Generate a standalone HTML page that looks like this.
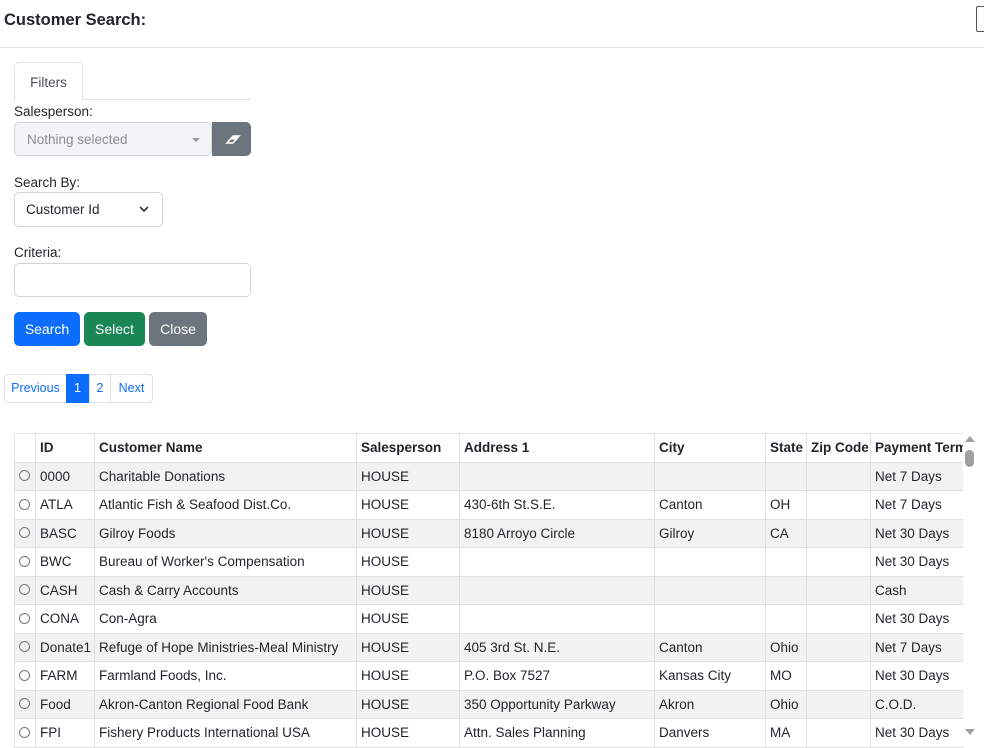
<!DOCTYPE html>
<html><head><style>
*{box-sizing:border-box}
body{margin:0;width:984px;height:746px;overflow:hidden;font-family:"Liberation Sans",sans-serif;font-size:13.5px;color:#212529;background:#fff;position:relative}
.abs{position:absolute}
.hdr{left:0;top:0;width:984px;height:48px;border-bottom:1px solid #dee2e6}
.title{left:4px;top:11px;font-size:16.5px;font-weight:bold;color:#212529}
.tab{left:14px;top:62px;width:69px;height:38px;border:1px solid #dee2e6;border-bottom:none;border-radius:5px 5px 0 0;background:#fff;text-align:center;line-height:40px;color:#495057}
.tabline{left:83px;top:99px;width:168px;border-top:1px solid #dee2e6}
.lbl{left:14px}
.inp{border:1px solid #ced4da;border-radius:5px;background:#fff}
.btn{color:#fff;border-radius:5px;text-align:center;line-height:34px;font-size:14px}
table{border-collapse:collapse;position:absolute;left:14px;top:433px;table-layout:fixed;width:949px}
td,th{border:1px solid #dee2e6;height:28.5px;padding:0 4px;white-space:nowrap;overflow:hidden;text-align:left}
th{font-weight:bold}
tr:nth-child(even) td{background:#f2f2f2}
.r{display:inline-block;width:11px;height:11px;border:1px solid #777;border-radius:50%;margin-top:2px}
.pg{top:374px;height:29px;border:1px solid #dee2e6;line-height:27px;color:#0d6efd;text-align:center;font-size:12.5px}
</style></head><body>
<div class="abs hdr"></div>
<div class="abs title">Customer Search:</div>
<div class="abs" style="left:976px;top:6px;width:10px;height:26px;border:1px solid #555;border-right:none;border-radius:2px"></div>
<div class="abs tab">Filters</div>
<div class="abs tabline"></div>
<div class="abs lbl" style="top:104px">Salesperson:</div>
<div class="abs inp" style="left:14px;top:122px;width:198px;height:34px;background:#f2f4f6;color:#8a8f94;line-height:33px;padding-left:12px">Nothing selected<span class="abs" style="right:11px;top:15px;border:4px solid transparent;border-top:4px solid #999;border-bottom:none"></span></div>
<div class="abs" style="left:212px;top:122px;width:39px;height:34px;background:#6c757d;border-radius:0 5px 5px 0"><svg width="39" height="34"><path d="M15 21 L21 14 H27 L21 21 Z" fill="none" stroke="#fff" stroke-width="1.6"/><path d="M18 17.5 L21 14 H27 L24 17.5 Z" fill="#fff"/></svg></div>
<div class="abs lbl" style="top:175px">Search By:</div>
<div class="abs inp" style="left:14px;top:192px;width:149px;height:35px;line-height:34px;padding-left:11px">Customer Id<svg class="abs" style="left:124px;top:13px" width="10" height="7"><path d="M1 1 L5 5 L9 1" fill="none" stroke="#333" stroke-width="1.6"/></svg></div>
<div class="abs lbl" style="top:245px">Criteria:</div>
<div class="abs inp" style="left:14px;top:263px;width:237px;height:34px"></div>
<div class="abs btn" style="left:14px;top:312px;width:66px;height:34px;background:#0d6efd">Search</div>
<div class="abs btn" style="left:84px;top:312px;width:61px;height:34px;background:#198754">Select</div>
<div class="abs btn" style="left:149px;top:312px;width:58px;height:34px;background:#6c757d">Close</div>
<div class="abs pg" style="left:4px;width:63px;border-radius:4px 0 0 4px">Previous</div>
<div class="abs pg" style="left:66px;width:23px;background:#0d6efd;color:#fff;border-color:#0d6efd">1</div>
<div class="abs pg" style="left:89px;width:22px">2</div>
<div class="abs pg" style="left:110px;width:43px;border-radius:0 4px 4px 0">Next</div>
<table>
<colgroup><col style="width:21px"><col style="width:59px"><col style="width:262px"><col style="width:103px"><col style="width:195px"><col style="width:111px"><col style="width:41px"><col style="width:64px"><col style="width:93px"></colgroup>
<tr><th></th><th>ID</th><th>Customer Name</th><th>Salesperson</th><th>Address 1</th><th>City</th><th>State</th><th>Zip Code</th><th>Payment Terms</th></tr>
<tr><td><span class="r"></span></td><td>0000</td><td>Charitable Donations</td><td>HOUSE</td><td></td><td></td><td></td><td></td><td>Net 7 Days</td></tr>
<tr><td><span class="r"></span></td><td>ATLA</td><td>Atlantic Fish &amp; Seafood Dist.Co.</td><td>HOUSE</td><td>430-6th St.S.E.</td><td>Canton</td><td>OH</td><td></td><td>Net 7 Days</td></tr>
<tr><td><span class="r"></span></td><td>BASC</td><td>Gilroy Foods</td><td>HOUSE</td><td>8180 Arroyo Circle</td><td>Gilroy</td><td>CA</td><td></td><td>Net 30 Days</td></tr>
<tr><td><span class="r"></span></td><td>BWC</td><td>Bureau of Worker's Compensation</td><td>HOUSE</td><td></td><td></td><td></td><td></td><td>Net 30 Days</td></tr>
<tr><td><span class="r"></span></td><td>CASH</td><td>Cash &amp; Carry Accounts</td><td>HOUSE</td><td></td><td></td><td></td><td></td><td>Cash</td></tr>
<tr><td><span class="r"></span></td><td>CONA</td><td>Con-Agra</td><td>HOUSE</td><td></td><td></td><td></td><td></td><td>Net 30 Days</td></tr>
<tr><td><span class="r"></span></td><td>Donate1</td><td>Refuge of Hope Ministries-Meal Ministry</td><td>HOUSE</td><td>405 3rd St. N.E.</td><td>Canton</td><td>Ohio</td><td></td><td>Net 7 Days</td></tr>
<tr><td><span class="r"></span></td><td>FARM</td><td>Farmland Foods, Inc.</td><td>HOUSE</td><td>P.O. Box 7527</td><td>Kansas City</td><td>MO</td><td></td><td>Net 30 Days</td></tr>
<tr><td><span class="r"></span></td><td>Food</td><td>Akron-Canton Regional Food Bank</td><td>HOUSE</td><td>350 Opportunity Parkway</td><td>Akron</td><td>Ohio</td><td></td><td>C.O.D.</td></tr>
<tr><td><span class="r"></span></td><td>FPI</td><td>Fishery Products International USA</td><td>HOUSE</td><td>Attn. Sales Planning</td><td>Danvers</td><td>MA</td><td></td><td>Net 30 Days</td></tr>
</table>
<div class="abs" style="left:963px;top:432px;width:14px;height:314px;background:#fff"></div>
<div class="abs" style="left:965px;top:436px;border:5px solid transparent;border-bottom:6px solid #a0a0a0;border-top:none"></div>
<div class="abs" style="left:965px;top:450px;width:9px;height:17px;background:#a0a0a0;border-radius:5px"></div>
<div class="abs" style="left:965px;top:729px;border:5px solid transparent;border-top:6px solid #a0a0a0;border-bottom:none"></div>
</body></html>
